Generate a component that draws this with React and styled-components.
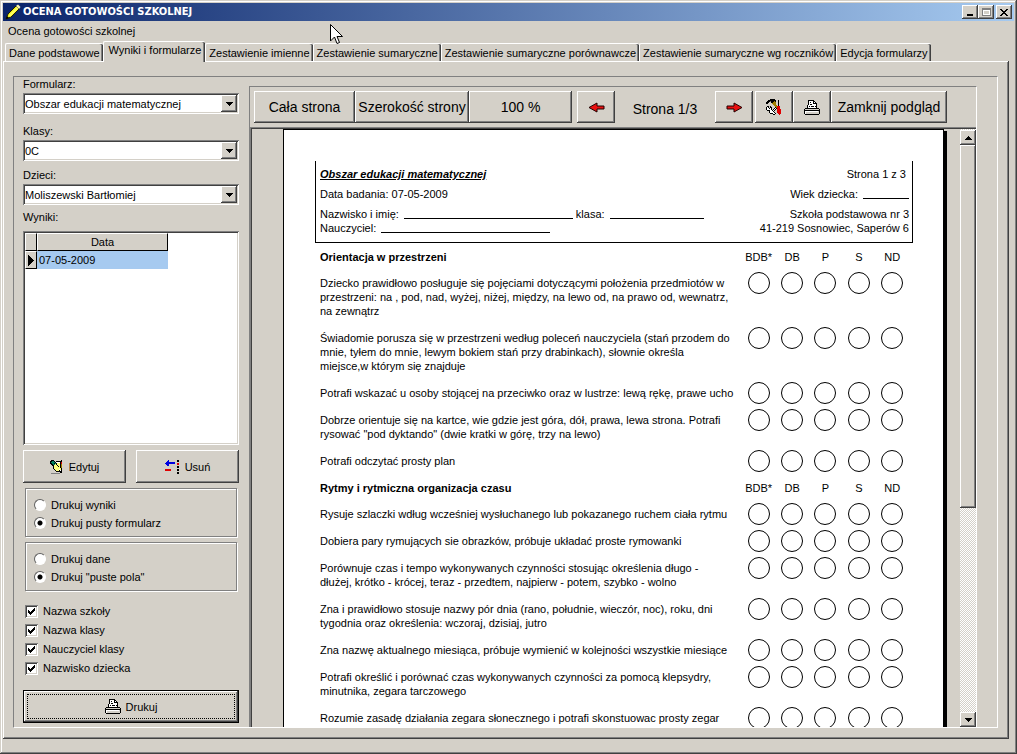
import React from 'react'
import styled, { createGlobalStyle, css } from 'styled-components'

const GlobalStyle = createGlobalStyle`
    * {
        box-sizing: border-box;
    }

    body {
        margin: 0;
        background: #d4d0c8;
        color: #000000;
        font-family: 'Liberation Sans', Arial, sans-serif;
        font-size: 11px;
        line-height: 14px;
    }

    button, select, input {
        font: inherit;
        color: inherit;
        margin: 0;
    }
`

const raised = css`
    box-shadow:
        inset -1px -1px 0 #404040,
        inset 1px 1px 0 #ffffff,
        inset -2px -2px 0 #808080;
`

const sunken = css`
    box-shadow:
        inset 1px 1px 0 #808080,
        inset -1px -1px 0 #ffffff,
        inset 2px 2px 0 #404040,
        inset -2px -2px 0 #d4d0c8;
`

const Window = styled.div`
    position: relative;
    display: flex;
    flex-direction: column;
    height: 100vh;
    padding: 3px;
    background: #d4d0c8;
    box-shadow:
        inset -1px -1px 0 #404040,
        inset 1px 1px 0 #d4d0c8,
        inset -2px -2px 0 #808080,
        inset 2px 2px 0 #ffffff;
`

const TitleBar = styled.header`
    display: flex;
    align-items: center;
    height: 18px;
    padding: 0 2px;
    background: linear-gradient(to right, #0a246a, #a6caf0);
`

const Title = styled.h1`
    flex: 1;
    margin: 0 0 0 2px;
    font-family: 'DejaVu Sans Condensed', 'DejaVu Sans', sans-serif;
    font-stretch: condensed;
    font-size: 11px;
    font-weight: 700;
    line-height: 18px;
    color: #ffffff;
`

const WindowButton = styled.button`
    display: flex;
    align-items: center;
    justify-content: center;
    width: 16px;
    height: 14px;
    margin-left: ${props => props.$apart ? '2px' : '0'};
    padding: 0;
    border: 0;
    background: #d4d0c8;
    ${raised}
`

const MenuBar = styled.nav`
    padding: 3px 5px;
    height: 20px;
`

const MenuItem = styled.a`
    color: inherit;
    text-decoration: none;
`

const Tabs = styled.div`
    display: flex;
    align-items: flex-end;
    height: 20px;
    padding-left: 2px;
`

const Tab = styled.button`
    position: relative;
    height: 18px;
    padding: 0 3px 0 3px;
    border: 0;
    border-top: 1px solid #ffffff;
    border-left: 1px solid #ffffff;
    border-radius: 2px 2px 0 0;
    background: #d4d0c8;
    box-shadow: inset -1px 0 0 #404040, inset -2px 0 0 #808080;
    line-height: 14px;
    white-space: nowrap;

    ${props => props.$active && css`
        z-index: 1;
        height: 21px;
        margin-bottom: -1px;
        padding: 0 4px 4px 5px;
    `}
`

const TabPanel = styled.main`
    display: flex;
    flex: 1;
    min-height: 0;
    margin: 0 5px 12px 0;
    padding: 15px 11px 11px 10px;
    box-shadow:
        inset -1px -1px 0 #404040,
        inset 1px 1px 0 #ffffff,
        inset -2px -2px 0 #808080;
`

const Frame = styled.div`
    display: flex;
    flex: 1;
    min-width: 0;
    border: 1px solid;
    border-color: #808080 #ffffff #ffffff #808080;
`

const Sidebar = styled.form`
    display: flex;
    flex-direction: column;
    flex: 0 0 235px;
    padding: 0 10px 4px 9px;
`

const Label = styled.label`
    margin-top: ${props => props.$space || 0}px;
    line-height: 15px;
`

const SelectBox = styled.div`
    position: relative;
    height: 21px;
    margin-top: 1px;
    background: #ffffff;
    ${sunken}

    select {
        appearance: none;
        width: 100%;
        height: 100%;
        padding: 0 18px 0 2px;
        border: 0;
        background: transparent;
    }

    > span {
        position: absolute;
        top: 2px;
        right: 2px;
        bottom: 2px;
        display: flex;
        align-items: center;
        justify-content: center;
        width: 16px;
        background: #d4d0c8;
        pointer-events: none;
        ${raised}
    }
`

const ListBox = styled.div`
    flex: 1;
    min-height: 60px;
    margin-top: 6px;
    padding: 2px;
    background: #ffffff;
    ${sunken}
`

const Results = styled.table`
    border-collapse: separate;
    border-spacing: 0;
    table-layout: fixed;
    width: 143px;

    th, td {
        height: 18px;
        padding: 0 2px;
        font-weight: 400;
        text-align: left;
    }

    th {
        padding: 0;
        border: 1px solid;
        border-color: #ffffff #000000 #000000 #ffffff;
        background: #d4d0c8;
        text-align: center;
    }

    th:first-child {
        width: 12px;
    }

    td {
        background: #a6caf0;
    }

    svg {
        display: block;
        margin: 0 auto;
    }
`

const ButtonRow = styled.div`
    display: flex;
    gap: 10px;
    margin-top: 5px;
`

const PushButton = styled.button`
    display: flex;
    flex: 1;
    align-items: center;
    justify-content: center;
    gap: 5px;
    height: 33px;
    padding: 0;
    border: 0;
    background: #d4d0c8;
    ${raised}
`

const PrintButton = styled(PushButton)`
    flex: none;
    margin-top: 15px;
    border: 1px solid #000000;
    outline: 1px dotted #000000;
    outline-offset: -5px;
`

const RadioGroup = styled.fieldset`
    display: flex;
    flex-direction: column;
    gap: 4px;
    margin: ${props => props.$space}px 2px 0;
    padding: 9px 8px 6px;
    border: 1px solid #808080;
    box-shadow: 1px 1px 0 #ffffff, inset 1px 1px 0 #ffffff;
`

const Option = styled.label`
    display: flex;
    align-items: center;
    gap: 5px;
    height: 14px;
`

const Radio = styled.input`
    appearance: none;
    width: 12px;
    height: 12px;
    border: 1px solid;
    border-color: #606060 #ffffff #ffffff #606060;
    border-radius: 50%;
    background: #ffffff;

    &:checked {
        background: radial-gradient(circle, #000000 2px, #ffffff 3px);
    }
`

const Checks = styled.div`
    display: flex;
    flex-direction: column;
    gap: 5px;
    margin: 13px 2px 0;
`

const CheckMark = styled.span`
    display: grid;
    width: 13px;
    height: 13px;

    > * {
        grid-area: 1 / 1;
    }

    input {
        appearance: none;
        width: 13px;
        height: 13px;
        background: #ffffff;
        ${sunken}
    }

    svg {
        place-self: center;
        visibility: hidden;
        pointer-events: none;
    }

    input:checked + svg {
        visibility: visible;
    }
`

const Preview = styled.section`
    display: flex;
    flex: 1;
    flex-direction: column;
    min-width: 0;
    margin: 9px 20px 0 0;
    border: 1px solid;
    border-color: #808080 #ffffff transparent #808080;
    border-bottom: 0;
`

const Toolbar = styled.div`
    display: flex;
    align-items: center;
    height: 40px;
    padding: 0 4px;
    font-size: 14px;
`

const ToolButton = styled(PushButton)`
    flex: 0 0 ${props => props.$width}px;
    height: 32px;
    margin-left: ${props => props.$space || 0}px;
    white-space: nowrap;
`

const PageNumber = styled.output`
    flex: 0 0 100px;
    padding-top: 3px;
    text-align: center;
`

const Viewport = styled.div`
    display: flex;
    flex: 1;
    min-height: 0;
    padding: 2px 0 0 2px;
    box-shadow: inset 1px 1px 0 #808080, inset 2px 2px 0 #404040;
    overflow: hidden;
`

const Desk = styled.div`
    flex: 1;
    min-width: 0;
    padding-left: 31px;
    overflow: hidden;
`

const Sheet = styled.article`
    width: 661px;
    min-height: 935px;
    padding: 31px 30px 40px 31px;
    border: 1px solid #000000;
    background: #ffffff;
    box-shadow: 3px 2px 0 #000000;
`

const SheetHeader = styled.div`
    display: flex;
    flex-direction: column;
    padding: 6px 3px 7px 4px;
    border: 1px solid #000000;
    border-top: 0;
`

const SheetLine = styled.div`
    display: flex;
    justify-content: space-between;
    margin-bottom: ${props => props.$space || 0}px;
    padding-right: ${props => props.$indent || 0}px;
`

const SheetTitle = styled.h2`
    margin: 0;
    font-size: 11px;
    font-style: italic;
    font-weight: 700;
    text-decoration: underline;
`

const Blank = styled.span`
    display: inline-block;
    width: ${props => props.$width}px;
    height: 12px;
    margin: 0 3px 0 5px;
    border-bottom: 1px solid #000000;
    vertical-align: top;

    &:last-child {
        margin-right: 0;
    }
`

const Criteria = styled.table`
    width: 589px;
    margin-left: 5px;
    border-spacing: 0;
    table-layout: fixed;

    th, td {
        padding: 7px 0 6px;
        font-weight: 400;
        text-align: center;
        vertical-align: top;
    }

    th {
        padding-bottom: 5px;
    }

    th:first-child {
        width: 422px;
        font-weight: 700;
        text-align: left;
    }

    td:first-child {
        text-align: left;
        white-space: pre;
    }

    td + td {
        padding: 3px 0 0;
    }
`

const Circle = styled.span`
    display: block;
    width: 22px;
    height: 22px;
    margin: 0 auto;
    border: 1px solid #000000;
    border-radius: 50%;
`

const ScrollBar = styled.div`
    display: flex;
    flex-direction: column;
    width: 16px;
    padding-top: 1px;
    background: repeating-conic-gradient(#ffffff 0 25%, #d4d0c8 0 50%) 0 0 / 2px 2px;
`

const ScrollArrow = styled.button`
    display: flex;
    align-items: center;
    justify-content: center;
    flex: 0 0 15px;
    padding: 0;
    border: 0;
    background: #d4d0c8;
    ${raised}
`

const ScrollTrack = styled.div`
    flex: 1;
`

const ScrollThumb = styled.div`
    height: 64%;
    background: #d4d0c8;
    ${raised}
`

const Pointer = styled.svg`
    position: absolute;
    top: 24px;
    left: 330px;
    pointer-events: none;
`

const PALETTE = {
    K: '#000000',
    W: '#ffffff',
    G: '#808080',
    L: '#d4d0c8',
    R: '#e00000',
    B: '#0000e0',
    Y: '#ffff80',
    O: '#a08000',
    T: '#008060',
}

const PRINTER = [
    '....KKKKKK......',
    '....KWWWWKK.....',
    '....KWKWWKWK....',
    '....KWWWWKKKK...',
    '....KWKKWWWWK...',
    '...KWWWWWWWWK...',
    '...KWKWKKKWKK...',
    '...KWWWWWWWWK...',
    '.KKKKKKKKKKKKKK.',
    'KLLLLLLLLLLLLLLK',
    'KKKKKKKKKKKKKKKK',
    'KWWWWWWWWWWWWWLK',
    'KWLLLLLLLLLLLLLK',
    'KWLLLLLLLLLLLLLK',
    '.KKKKKKKKKKKKKK.',
]

const TOOLS = [
    '....KKKKK.......',
    '..KKKKKKKK..K...',
    '.KKKGKKKOK..K...',
    'KKK..KKOOO..K...',
    'KK....OOOO..K...',
    '.......OOO..K...',
    '........OOO.K...',
    '.KK.K....OORRR..',
    'KWK.KK...KORRR..',
    'KWWKWK..KWKRRR..',
    'KWWWWK.KWK.RRRR.',
    '.KKKWWKWK..RRRR.',
    '...KWWWK...RRRR.',
    '...KWWWWK..RRRR.',
    '....KKKWWK..RRR.',
    '.......KK....R..',
]

const EDIT = [
    '.KKK.......K..',
    'KKTTK.KKKKKK..',
    'KTTTTKWWWWKR..',
    'KKTTKTKYYYKR..',
    '.KKTTYKYYYKO..',
    '..KKYYYKYYKO..',
    '...KYYYYKYKO..',
    '...KYYYYYYKO..',
    '...KYYYYYYYK..',
    '....KYYYYWYK..',
    '.....KYYYKWK..',
    '......KKKKKK..',
    '..........KK..',
    '.GGGGGGGGG....',
]

const REMOVE = [
    '...B........KK.',
    '..BB........KK.',
    '.BBBBBBBBB.....',
    'BBBBBBBBBB..RR.',
    '.BBB........RR.',
    '..BB...........',
    '............KK.',
    '............KK.',
    '...............',
    'RRRRRR......KK.',
    'RRRRRR......KK.',
    '...............',
    '............KK.',
    '............KK.',
]

function PixelIcon({ rows }) {
    const width = rows[0].length
    return (
        <svg width={width} height={rows.length} shapeRendering="crispEdges" aria-hidden="true">
            {rows.map((row, y) => row.split('').map((key, x) => (
                PALETTE[key] && <rect key={`${x}-${y}`} x={x} y={y} width="1" height="1" fill={PALETTE[key]} />
            )))}
        </svg>
    )
}

const DOWN = ['KKKKKKK', '.KKKKK.', '..KKK..', '...K...']
const UP = [...DOWN].reverse()
const MARKER = ['K.....', 'KK....', 'KKK...', 'KKKK..', 'KKKKK.', 'KKKKKK', 'KKKKK.', 'KKKK..', 'KKK...', 'KK....', 'K.....']
const TICK = ['......K', '.....KK', 'K...KKK', 'KK.KKK.', 'KKKKK..', '.KKK...', '..K....']
const MINIMIZE = ['.......', '.......', '.......', '.......', '.......', 'KKKKKK.', 'KKKKKK.']
const MAXIMIZE = ['GGGGGGGGG', 'GGGGGGGGG', 'GWWWWWWWG', 'GWLLLLLWG', 'GWLLLLLWG', 'GWLLLLLWG', 'GWWWWWWWG', 'GGGGGGGGG']
const CLOSE = ['KK....KK', '.KK..KK.', '..KKKK..', '...KK...', '..KKKK..', '.KK..KK.', 'KK....KK']

function RedArrow({ flip }) {
    return (
        <svg width="17" height="11" viewBox="0 0 17 11" aria-hidden="true">
            <path
                d="M1 5.5L9 1V4H16V7H9V10Z"
                fill="#e81010"
                stroke="#200000"
                transform={flip ? 'rotate(180 8.5 5.5)' : undefined}
            />
        </svg>
    )
}

const TABS = [
    'Dane podstawowe',
    'Wyniki i formularze',
    'Zestawienie imienne',
    'Zestawienie sumaryczne',
    'Zestawienie sumaryczne porównawcze',
    'Zestawienie sumaryczne wg roczników',
    'Edycja formularzy',
]

const GRADES = ['BDB*', 'DB', 'P', 'S', 'ND']

const SECTIONS = [
    {
        name: 'Orientacja w przestrzeni',
        items: [
            'Dziecko prawidłowo posługuje się pojęciami dotyczącymi położenia przedmiotów w\nprzestrzeni: na , pod, nad, wyżej, niżej, między, na lewo od, na prawo od, wewnatrz,\nna zewnątrz',
            'Świadomie porusza się w przestrzeni według poleceń nauczyciela (stań przodem do\nmnie, tyłem do mnie, lewym bokiem stań przy drabinkach), słownie określa\nmiejsce,w którym się znajduje',
            'Potrafi wskazać u osoby stojącej na przeciwko oraz w lustrze: lewą rękę, prawe ucho',
            'Dobrze orientuje się na kartce, wie gdzie jest góra, dół, prawa, lewa strona. Potrafi\nrysować "pod dyktando" (dwie kratki w górę, trzy na lewo)',
            'Potrafi odczytać prosty plan',
        ],
    },
    {
        name: 'Rytmy i rytmiczna organizacja czasu',
        items: [
            'Rysuje szlaczki wdług wcześniej wysłuchanego lub pokazanego ruchem ciała rytmu',
            'Dobiera pary rymujących sie obrazków, próbuje układać proste rymowanki',
            'Porównuje czas i tempo wykonywanych czynności stosując określenia długo -\ndłużej, krótko - krócej, teraz - przedtem, najpierw - potem, szybko - wolno',
            'Zna i prawidłowo stosuje nazwy pór dnia (rano, południe, wieczór, noc), roku, dni\ntygodnia oraz określenia: wczoraj, dzisiaj, jutro',
            'Zna nazwę aktualnego miesiąca, próbuje wymienić w kolejności wszystkie miesiące',
            'Potrafi określić i porównać czas wykonywanych czynności za pomocą klepsydry,\nminutnika, zegara tarczowego',
            'Rozumie zasadę działania zegara słonecznego i potrafi skonstuowac prosty zegar',
        ],
    },
]

function SelectField({ id, label, value, space }) {
    return (
        <>
            <Label htmlFor={id} $space={space}>{label}</Label>
            <SelectBox>
                <select id={id} defaultValue={value}>
                    <option>{value}</option>
                </select>
                <span><PixelIcon rows={DOWN} /></span>
            </SelectBox>
        </>
    )
}

function Radios({ name, options, space }) {
    return (
        <RadioGroup $space={space}>
            {options.map((text, i) => (
                <Option key={text}>
                    <Radio type="radio" name={name} defaultChecked={i === 1} />
                    {text}
                </Option>
            ))}
        </RadioGroup>
    )
}

function PrintOptions() {
    return (
        <Sidebar onSubmit={e => e.preventDefault()}>
            <SelectField id="form" label="Formularz:" value="Obszar edukacji matematycznej" />
            <SelectField id="class" label="Klasy:" value="0C" space={10} />
            <SelectField id="child" label="Dzieci:" value="Moliszewski Bartłomiej" space={7} />
            <Label as="div" $space={5}>Wyniki:</Label>
            <ListBox>
                <Results>
                    <thead>
                        <tr>
                            <th />
                            <th>Data</th>
                        </tr>
                    </thead>
                    <tbody>
                        <tr>
                            <th><PixelIcon rows={MARKER} /></th>
                            <td>07-05-2009</td>
                        </tr>
                    </tbody>
                </Results>
            </ListBox>
            <ButtonRow>
                <PushButton type="button"><PixelIcon rows={EDIT} />Edytuj</PushButton>
                <PushButton type="button"><PixelIcon rows={REMOVE} />Usuń</PushButton>
            </ButtonRow>
            <Radios name="results" options={['Drukuj wyniki', 'Drukuj pusty formularz']} space={5} />
            <Radios name="data" options={['Drukuj dane', 'Drukuj "puste pola"']} space={5} />
            <Checks>
                {['Nazwa szkoły', 'Nazwa klasy', 'Nauczyciel klasy', 'Nazwisko dziecka'].map(text => (
                    <Option key={text}>
                        <CheckMark>
                            <input type="checkbox" defaultChecked />
                            <PixelIcon rows={TICK} />
                        </CheckMark>
                        {text}
                    </Option>
                ))}
            </Checks>
            <PrintButton type="submit"><PixelIcon rows={PRINTER} />Drukuj</PrintButton>
        </Sidebar>
    )
}

function Page() {
    return (
        <Sheet>
            <SheetHeader>
                <SheetLine $space={6} $indent={3}>
                    <SheetTitle>Obszar edukacji matematycznej</SheetTitle>
                    <span>Strona 1 z 3</span>
                </SheetLine>
                <SheetLine $space={6}>
                    <span>Data badania: 07-05-2009</span>
                    <span>Wiek dziecka:<Blank $width={46} /></span>
                </SheetLine>
                <SheetLine>
                    <span>Nazwisko i imię:<Blank $width={169} />klasa:<Blank $width={94} /></span>
                    <span>Szkoła podstawowa nr 3</span>
                </SheetLine>
                <SheetLine>
                    <span>Nauczyciel:<Blank $width={169} /></span>
                    <span>41-219 Sosnowiec, Saperów 6</span>
                </SheetLine>
            </SheetHeader>
            <Criteria>
                {SECTIONS.map(({ name, items }) => (
                    <tbody key={name}>
                        <tr>
                            <th>{name}</th>
                            {GRADES.map(grade => <th key={grade}>{grade}</th>)}
                        </tr>
                        {items.map(item => (
                            <tr key={item}>
                                <td>{item}</td>
                                {GRADES.map(grade => <td key={grade}><Circle /></td>)}
                            </tr>
                        ))}
                    </tbody>
                ))}
            </Criteria>
        </Sheet>
    )
}

function App() {
    return (
        <>
            <GlobalStyle />
            <Window>
                <TitleBar>
                    <svg width="16" height="16" viewBox="0 0 16 16" aria-hidden="true">
                        <path d="M1 15L3 10L11 2L14 5L6 13Z" fill="#f0f020" stroke="#202000" />
                        <path d="M11 2L13 0.5L15.5 3L14 5Z" fill="#fff8b0" />
                        <path d="M1 15L2 12L4 14Z" fill="#000000" />
                        <path d="M4.5 12L12.5 4" stroke="#ffff60" strokeWidth="2" />
                    </svg>
                    <Title>OCENA GOTOWOŚCI SZKOLNEJ</Title>
                    <WindowButton aria-label="Minimalizuj"><PixelIcon rows={MINIMIZE} /></WindowButton>
                    <WindowButton aria-label="Maksymalizuj"><PixelIcon rows={MAXIMIZE} /></WindowButton>
                    <WindowButton aria-label="Zamknij" $apart><PixelIcon rows={CLOSE} /></WindowButton>
                </TitleBar>
                <MenuBar>
                    <MenuItem href="#">Ocena gotowości szkolnej</MenuItem>
                </MenuBar>
                <Tabs role="tablist">
                    {TABS.map((tab, i) => (
                        <Tab key={tab} role="tab" aria-selected={i === 1} $active={i === 1}>{tab}</Tab>
                    ))}
                </Tabs>
                <TabPanel>
                    <Frame>
                        <PrintOptions />
                        <Preview>
                            <Toolbar>
                                <ToolButton $width={101}>Cała strona</ToolButton>
                                <ToolButton $width={114}>Szerokość strony</ToolButton>
                                <ToolButton $width={103}>100 %</ToolButton>
                                <ToolButton $width={38} $space={5} aria-label="Poprzednia strona"><RedArrow /></ToolButton>
                                <PageNumber>Strona 1/3</PageNumber>
                                <ToolButton $width={38} aria-label="Następna strona"><RedArrow flip /></ToolButton>
                                <ToolButton $width={38} $space={2} aria-label="Ustawienia"><PixelIcon rows={TOOLS} /></ToolButton>
                                <ToolButton $width={38} aria-label="Drukuj"><PixelIcon rows={PRINTER} /></ToolButton>
                                <ToolButton $width={116}>Zamknij podgląd</ToolButton>
                            </Toolbar>
                            <Viewport>
                                <Desk>
                                    <Page />
                                </Desk>
                                <ScrollBar>
                                    <ScrollArrow aria-label="W górę"><PixelIcon rows={UP} /></ScrollArrow>
                                    <ScrollTrack>
                                        <ScrollThumb />
                                    </ScrollTrack>
                                    <ScrollArrow aria-label="W dół"><PixelIcon rows={DOWN} /></ScrollArrow>
                                </ScrollBar>
                            </Viewport>
                        </Preview>
                    </Frame>
                </TabPanel>
                <Pointer width="13" height="21" viewBox="0 0 13 21" aria-hidden="true">
                    <path d="M0.5 0.5V17L4.5 13L7 19.5L9.5 18.5L7 12.5H12.5Z" fill="#ffffff" stroke="#000000" />
                </Pointer>
            </Window>
        </>
    )
}

export default App
